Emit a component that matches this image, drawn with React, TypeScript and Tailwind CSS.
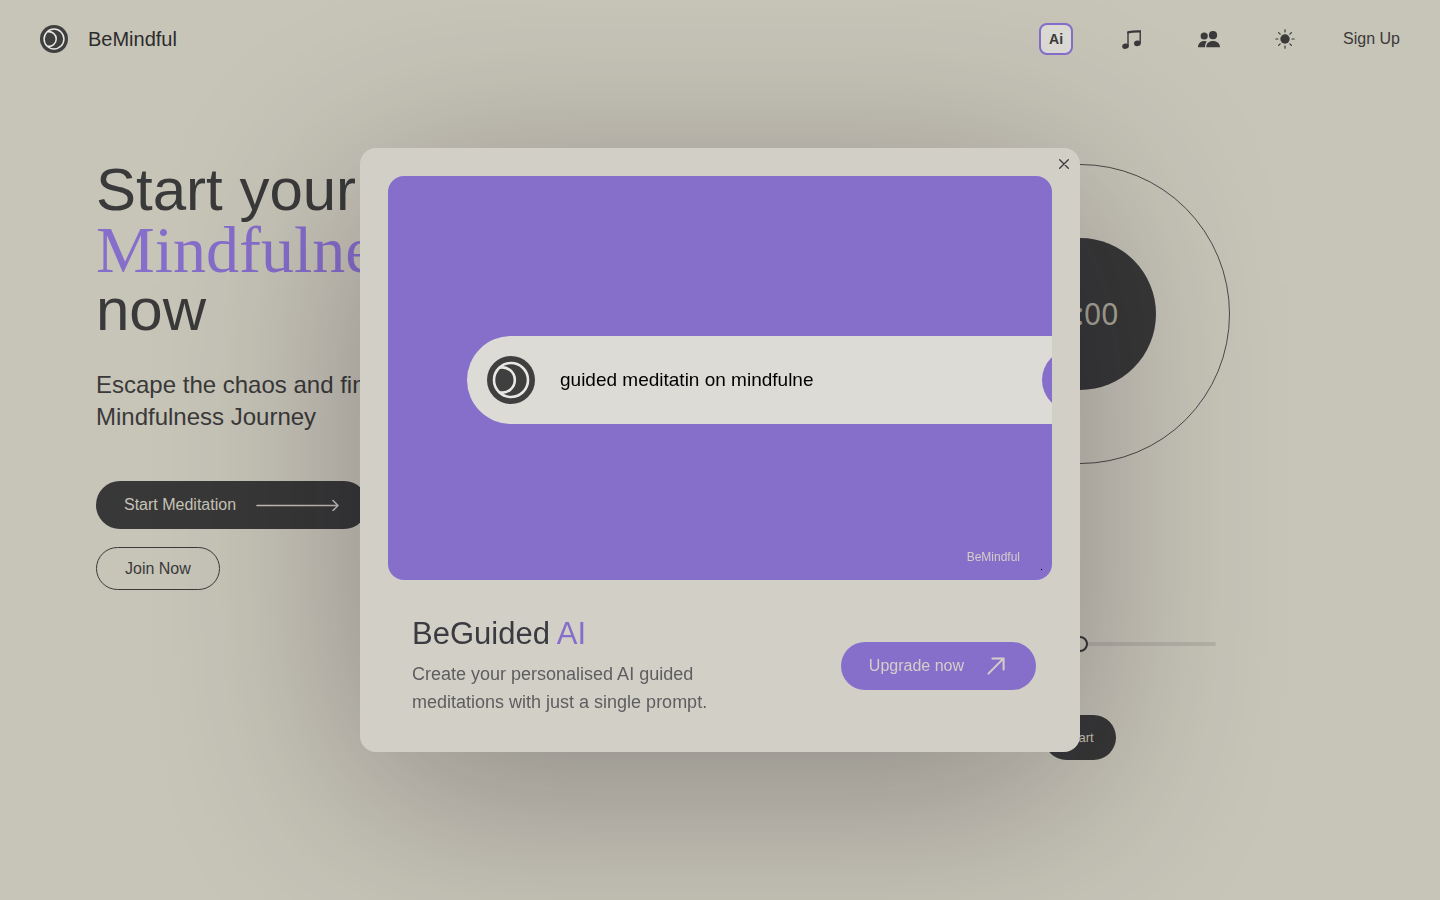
import { useState } from 'react'

function Logo({ className }: { className?: string }) {
  return (
    <svg viewBox="0 0 48 48" fill="none" className={className} aria-hidden="true">
      <circle cx="24" cy="24" r="24" fill="#3f3f3f" />
      <circle cx="24" cy="24" r="17" stroke="#e9e8e4" strokeWidth="2.6" />
      <path d="M13 11.6a12.6 12.6 0 1 1 0 24.8" stroke="#e9e8e4" strokeWidth="2.6" />
    </svg>
  )
}

function MusicIcon() {
  return (
    <svg width="22" height="20" viewBox="0 0 22 20" aria-hidden="true">
      <path d="M6 17V3M18.2 14V2" stroke="#3a3a3a" strokeWidth="1.4" />
      <path d="M5.3 2.2Q12 1 19 1.3V3.6Q12 3.3 5.3 4.6Z" fill="#3a3a3a" />
      <ellipse cx="3.5" cy="17.2" rx="3.4" ry="2.7" transform="rotate(-10 3.5 17.2)" fill="#3a3a3a" />
      <ellipse cx="15.4" cy="14.3" rx="3.4" ry="2.8" transform="rotate(-10 15.4 14.3)" fill="#3a3a3a" />
    </svg>
  )
}

function PeopleIcon() {
  return (
    <svg width="22" height="17" viewBox="0 0 22 17" fill="#3a3a3a" aria-hidden="true">
      <circle cx="6.2" cy="5" r="3.6" />
      <circle cx="15" cy="4.2" r="4.1" />
      <path d="M0 16.2C0 12.4 2.7 9.9 6.2 9.9c1.1 0 2 .2 2.8.6C7.6 11.8 7 13.7 7 16.2Z" />
      <path d="M8.2 16.2C8.2 12.4 11 10 15 10s7 2.4 7 6.2Z" />
    </svg>
  )
}

function SunIcon() {
  return (
    <svg width="20" height="20" viewBox="0 0 20 20" aria-hidden="true">
      <circle cx="10" cy="10" r="4.7" fill="#3a3a3a" />
      <path
        d="M10 .8v2.2M10 17v2.2M.8 10h2.2M17 10h2.2M3.6 3.6l1.6 1.6M14.8 14.8l1.6 1.6M3.6 16.4l1.6-1.6M14.8 5.2l1.6-1.6"
        stroke="#3a3a3a"
        strokeWidth="1.2"
        strokeLinecap="round"
      />
    </svg>
  )
}

const navButton = 'flex h-9 w-9 items-center justify-center'

function Header() {
  return (
    <header className="flex h-[78px] items-center justify-between px-10">
      <a href="#" className="flex items-center gap-5 text-xl text-[#2c2c2c]">
        <Logo className="h-7 w-7" />
        BeMindful
      </a>
      <nav className="flex items-center gap-10">
        <div className="w-9">
          <button className="flex h-8 w-[34px] items-center justify-center rounded-lg border-2 border-[#866ecb] bg-[#dcdbd6] text-sm font-bold text-[#3a3a3a]">
            Ai
          </button>
        </div>
        <button className={navButton} aria-label="Music">
          <MusicIcon />
        </button>
        <button className={navButton} aria-label="Community">
          <PeopleIcon />
        </button>
        <button className={navButton} aria-label="Toggle theme">
          <SunIcon />
        </button>
        <a href="#signup" className="text-base">
          Sign Up
        </a>
      </nav>
    </header>
  )
}

function Hero() {
  return (
    <section className="pl-24">
      <h1 className="text-[60px] leading-[61px]">
        Start your
        <span className="block font-['Liberation_Serif',serif] text-[66px] leading-[59px] text-[#866ecb]">
          Mindfulness
        </span>
        now
      </h1>
      <p className="mt-[29px] text-2xl leading-8">
        Escape the chaos and find your
        <br />
        Mindfulness Journey
      </p>
      <div className="mt-12 flex flex-col items-start gap-[18px]">
        <button className="flex h-12 items-center gap-5 rounded-full bg-[#383838] px-7 text-base text-[#c7c4b8]">
          Start Meditation
          <svg width="84" height="12" viewBox="0 0 84 12" fill="none" aria-hidden="true">
            <path
              d="M1 6.5h81M77 1.5l5 5-5 5"
              stroke="#c7bfb8"
              strokeWidth="1.6"
              strokeLinecap="round"
              strokeLinejoin="round"
            />
          </svg>
        </button>
        <button className="h-[43px] rounded-full border border-[#3a3a3a] px-7 text-base">Join Now</button>
      </div>
    </section>
  )
}

function Timer() {
  const [minutes, setMinutes] = useState(10)

  return (
    <section className="flex flex-col items-center pt-[5px]">
      <div className="flex h-[300px] w-[300px] items-center justify-center rounded-full border border-[#4a4a48]">
        <div className="flex h-[152px] w-[152px] items-center justify-center rounded-full bg-[#383838] font-['Noto_Sans',sans-serif] text-3xl text-[#aaa798]">
          {minutes}:00
        </div>
      </div>
      <input
        type="range"
        aria-label="Session length in minutes"
        min={0}
        max={20}
        value={minutes}
        onChange={(e) => setMinutes(Number(e.target.value))}
        className="mt-[172px] h-4 w-[272px] appearance-none bg-transparent [&::-webkit-slider-runnable-track]:h-1 [&::-webkit-slider-runnable-track]:rounded-full [&::-webkit-slider-runnable-track]:bg-[#b4b1a7] [&::-webkit-slider-thumb]:-mt-1.5 [&::-webkit-slider-thumb]:h-4 [&::-webkit-slider-thumb]:w-4 [&::-webkit-slider-thumb]:appearance-none [&::-webkit-slider-thumb]:rounded-full [&::-webkit-slider-thumb]:border-2 [&::-webkit-slider-thumb]:border-[#383838] [&::-webkit-slider-thumb]:bg-[#c7c4b8]"
      />
      <button className="mt-[63px] h-[45px] rounded-full bg-[#383838] px-[22px] text-[13px] text-[#c7c4b8]">
        Start
      </button>
    </section>
  )
}

function PromptPreview() {
  return (
    <div className="relative flex h-[404px] flex-col overflow-hidden rounded-2xl bg-[#866ecb] pt-40">
      <div className="ml-[79px] flex h-[88px] w-[650px] shrink-0 items-center rounded-full bg-[#dcdbd6] pr-[13px] pl-5">
        <Logo className="h-12 w-12 shrink-0" />
        <span className="ml-[25px] text-[19px] text-black">guided meditatin on mindfulne</span>
        <span className="ml-auto h-[62px] w-[62px] rounded-full bg-[#866ecb]" />
      </div>
      <span className="mt-auto self-end pr-8 pb-[15px] text-xs text-[#d2cfc7]">BeMindful</span>
      <span className="absolute right-2.5 bottom-2.5 h-px w-px bg-black" />
    </div>
  )
}

function UpgradeDialog({ onClose }: { onClose: () => void }) {
  return (
    <div className="fixed inset-0 z-10 flex items-center justify-center">
      <div
        role="dialog"
        aria-labelledby="upgrade-title"
        className="relative w-full max-w-[720px] rounded-2xl bg-[#d2cfc7] px-7 pt-7 shadow-[0_40px_200px_rgba(12,8,20,0.31)]"
      >
        <button
          onClick={onClose}
          aria-label="Close"
          className="absolute top-0 right-0 flex h-8 w-8 items-center justify-center"
        >
          <svg width="10" height="10" viewBox="0 0 10 10" aria-hidden="true">
            <path d="M.7.7l8.6 8.6M9.3.7L.7 9.3" stroke="#3a3a3a" strokeWidth="1.3" strokeLinecap="round" />
          </svg>
        </button>

        <PromptPreview />

        <div className="flex items-center justify-between py-9 pr-4 pl-6">
          <div>
            <h2 id="upgrade-title" className="text-[31px] leading-9 text-[#3a3b40]">
              BeGuided <span className="text-[#866ecb]">AI</span>
            </h2>
            <p className="mt-2 text-lg leading-7 text-[#5e5e60]">
              Create your personalised AI guided
              <br />
              meditations with just a single prompt.
            </p>
          </div>
          <button className="flex h-12 items-center gap-5 rounded-full bg-[#866ecb] px-7 text-base text-[#d2cfc7]">
            Upgrade now
            <svg width="24" height="24" viewBox="0 0 24 24" fill="none" aria-hidden="true">
              <path
                d="M4.4 19.6L19.6 4.4M8.4 4.4H19.6V15.6"
                stroke="#d2cfc7"
                strokeWidth="2"
                strokeLinecap="round"
                strokeLinejoin="round"
              />
            </svg>
          </button>
        </div>
      </div>
    </div>
  )
}

export default function App() {
  const [dialogOpen, setDialogOpen] = useState(true)

  return (
    <div className="min-h-screen bg-[#c7c4b8] font-['Liberation_Sans',sans-serif] text-[#3a3a3a]">
      <Header />
      <main className="grid grid-cols-2 pt-[81px]">
        <Hero />
        <Timer />
      </main>
      {dialogOpen && <UpgradeDialog onClose={() => setDialogOpen(false)} />}
    </div>
  )
}
